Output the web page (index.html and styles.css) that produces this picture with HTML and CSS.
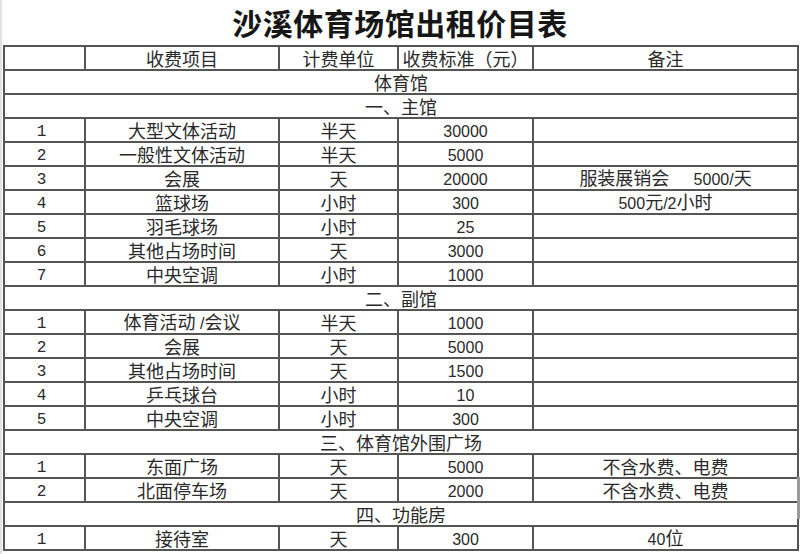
FILE: index.html
```html
<!DOCTYPE html>
<html lang="zh-CN">
<head>
<meta charset="utf-8">
<title>沙溪体育场馆出租价目表</title>
<link rel="stylesheet" href="styles.css">
</head>
<body>
<div class="page">
  <h1 class="title">沙溪体育场馆出租价目表</h1>
  <table class="price">
    <colgroup>
      <col class="c-no"><col class="c-item"><col class="c-unit"><col class="c-fee"><col class="c-note">
    </colgroup>
    <tr><td></td><td>收费项目</td><td>计费单位</td><td>收费标准（元）</td><td>备注</td></tr>
    <tr><td colspan="5" class="span">体育馆</td></tr>
    <tr><td colspan="5" class="span">一、主馆</td></tr>
    <tr><td class="no">1</td><td>大型文体活动</td><td>半天</td><td class="fee">30000</td><td></td></tr>
    <tr><td class="no">2</td><td>一般性文体活动</td><td>半天</td><td class="fee">5000</td><td></td></tr>
    <tr><td class="no">3</td><td>会展</td><td>天</td><td class="fee">20000</td><td class="note">服装展销会      <span class="num">5000/</span>天</td></tr>
    <tr><td class="no">4</td><td>篮球场</td><td>小时</td><td class="fee">300</td><td class="note"><span class="num">500</span>元<span class="num">/2</span>小时</td></tr>
    <tr><td class="no">5</td><td>羽毛球场</td><td>小时</td><td class="fee">25</td><td></td></tr>
    <tr><td class="no">6</td><td>其他占场时间</td><td>天</td><td class="fee">3000</td><td></td></tr>
    <tr><td class="no">7</td><td>中央空调</td><td>小时</td><td class="fee">1000</td><td></td></tr>
    <tr><td colspan="5" class="span">二、副馆</td></tr>
    <tr><td class="no">1</td><td>体育活动<span class="num"> /</span>会议</td><td>半天</td><td class="fee">1000</td><td></td></tr>
    <tr><td class="no">2</td><td>会展</td><td>天</td><td class="fee">5000</td><td></td></tr>
    <tr><td class="no">3</td><td>其他占场时间</td><td>天</td><td class="fee">1500</td><td></td></tr>
    <tr><td class="no">4</td><td>乒乓球台</td><td>小时</td><td class="fee">10</td><td></td></tr>
    <tr><td class="no">5</td><td>中央空调</td><td>小时</td><td class="fee">300</td><td></td></tr>
    <tr><td colspan="5" class="span">三、体育馆外围广场</td></tr>
    <tr><td class="no">1</td><td>东面广场</td><td>天</td><td class="fee">5000</td><td>不含水费、电费</td></tr>
    <tr><td class="no">2</td><td>北面停车场</td><td>天</td><td class="fee">2000</td><td>不含水费、电费</td></tr>
    <tr><td colspan="5" class="span">四、功能房</td></tr>
    <tr><td class="no">1</td><td>接待室</td><td>天</td><td class="fee">300</td><td><span class="num">40</span>位</td></tr>
  </table>
  <div class="scroll-mark"></div>
</div>
</body>
</html>
```

FILE: styles.css
```css
html, body {
  margin: 0;
  padding: 0;
  background: #ffffff;
}

.page {
  position: relative;
  width: 800px;
  height: 554px;
  overflow: hidden;
  border-left: 2px solid #e2e2e2;
  box-sizing: border-box;
  font-family: "Noto Sans CJK SC", "Liberation Sans", sans-serif;
  color: #2a2a2a;
}

.title {
  margin: 0;
  height: 45px;
  line-height: 44px;
  text-align: center;
  font-size: 30px;
  font-weight: 700;
  letter-spacing: 0.5px;
  color: #161616;
  padding-right: 2px;
}

.price {
  margin-left: 1px;
  width: 794px;
  table-layout: fixed;
  border-collapse: collapse;
  font-size: 18px;
}

.c-no { width: 81px; }
.c-item { width: 194px; }
.c-unit { width: 119px; }
.c-fee { width: 135px; }
.c-note { width: 265px; }

.price tr {
  height: 24px;
}

.price td {
  border: 2px solid #555555;
  height: 22px;
  padding: 0;
  line-height: 16px;
  text-align: center;
  vertical-align: middle;
  white-space: nowrap;
}

.price td.span {
  text-align: center;
}

.price td.no {
  font-family: "Liberation Mono", monospace;
  font-size: 16px;
  padding-right: 6px;
  padding-top: 3px;
  height: 19px;
}

.price td.fee {
  font-family: "Liberation Sans", sans-serif;
  font-size: 16px;
  padding-top: 3px;
  height: 19px;
}

.num {
  font-family: "Liberation Sans", sans-serif;
  font-size: 16px;
  line-height: 16px;
}

.price td.note {
  white-space: pre;
}

.scroll-mark {
  position: absolute;
  right: 0;
  top: 477px;
  width: 3px;
  height: 42px;
  background: #9a9a9a;
}
```
